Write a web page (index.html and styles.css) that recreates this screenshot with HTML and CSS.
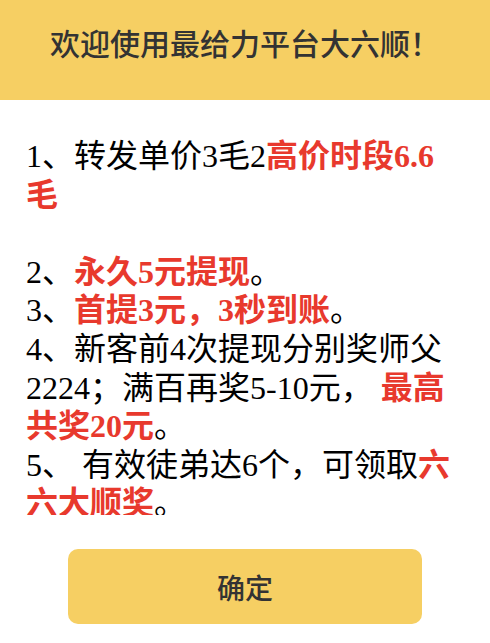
FILE: index.html
```html
<!DOCTYPE html>
<html lang="zh-CN">
<head>
<meta charset="utf-8">
<title>大六顺</title>
<link rel="stylesheet" href="styles.css">
</head>
<body>
<div class="header"><h1 class="title">欢迎使用最给力平台大六顺！</h1></div>
<div class="content">
<div class="text">1、转发单价3毛2<b class="red">高价时段6.6毛</b><br><br>2、<b class="red">永久5元提现</b>。<br>3、<b class="red">首提3元，3秒到账</b>。<br>4、新客前4次提现分别奖师父2224；满百再奖5-10元， <b class="red">最高共奖20元</b>。<br>5、 有效徒弟达6个，可领取<b class="red">六六大顺奖</b>。</div>
</div>
<div class="footer"><button class="btn" type="button">确定</button></div>
</body>
</html>
```
FILE: styles.css
```css
html, body {
  margin: 0;
  padding: 0;
  background: #ffffff;
}
body {
  width: 490px;
  height: 643px;
  overflow: hidden;
}
.header {
  height: 100px;
  background: #f6cf63;
  box-sizing: border-box;
  padding-top: 23px;
}
.title {
  margin: 0;
  font-family: "Noto Sans CJK SC", sans-serif;
  font-weight: 500;
  font-size: 30px;
  line-height: 38px;
  color: #333333;
  text-align: center;
}
.content {
  height: 415px;
  overflow: hidden;
  box-sizing: border-box;
  padding: 37px 26px 0;
}
.text {
  font-family: "Liberation Serif", "Noto Sans CJK SC", serif;
  font-size: 32px;
  line-height: 38.6px;
  color: #000000;
}
.red {
  color: #e8392d;
  font-weight: bold;
}
.footer {
  padding-top: 34px;
  display: flex;
  justify-content: center;
}
.btn {
  width: 354px;
  height: 75px;
  border: none;
  border-radius: 10px;
  background: #f6cf63;
  color: #333333;
  font-family: "Noto Sans CJK SC", sans-serif;
  font-weight: 500;
  font-size: 28px;
  padding: 0;
}
```
